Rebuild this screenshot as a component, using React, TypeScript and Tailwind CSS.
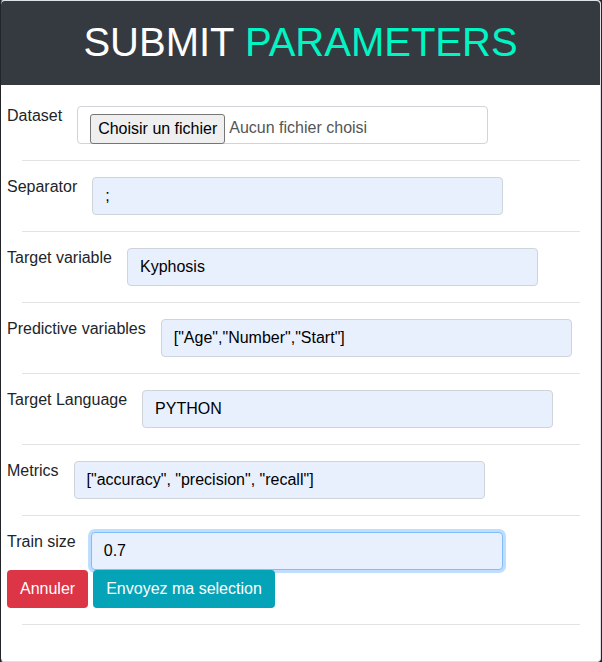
const font = { fontFamily: '"Liberation Sans", Arial, sans-serif' };

function Field({
  label,
  value,
  focused,
}: {
  label: string;
  value: string;
  focused?: boolean;
}) {
  return (
    <div className="flex items-start">
      <label className="-mt-0.5 mr-[15px] text-base leading-6 text-[#212529] whitespace-nowrap">
        {label}
      </label>
      <div
        className={
          focused
            ? "flex h-[38px] w-[412px] items-center rounded border border-[#80bdff] bg-[#e8f0fe] px-3 text-base text-black shadow-[0_0_0_3px_rgba(0,123,255,0.25)]"
            : "flex h-[38px] w-[411px] items-center rounded border border-[#ced4da] bg-[#e8f0fe] px-3 text-base text-black"
        }
      >
        {value}
      </div>
    </div>
  );
}

function Divider() {
  return <hr className="my-4 ml-[15px] w-[558px] border-0 border-t border-[#e3e3e3]" />;
}

export default function App() {
  return (
    <div className="flex h-[662px] w-[602px] bg-[#212529]" style={font}>
      <div className="flex h-[662px] w-[601px] flex-col rounded border border-[#dee2e6] border-l-[#212529] bg-white">
        <div className="flex h-[84px] items-center justify-center rounded-t bg-[#343a40] pb-[2px]">
          <h1 className="text-[40px] leading-[48px] text-white">
            SUBMIT <span className="text-[#00f5c4]">PARAMETERS</span>
          </h1>
        </div>

        <div className="pt-[21px] pl-[6px]">
          <div className="flex items-start">
            <label className="-mt-0.5 mr-[15px] text-base leading-6 text-[#212529]">Dataset</label>
            <div className="flex h-[38px] w-[411px] items-end rounded border border-[#ced4da] bg-white pl-3">
              <span className="mb-[-1px] rounded-[3px] border border-[#767676] bg-[#efefef] px-[7px] text-base leading-[28px] text-black">
                Choisir un fichier
              </span>
              <span className="mb-[3px] ml-1 text-base text-[#555]">Aucun fichier choisi</span>
            </div>
          </div>
          <Divider />
          <Field label="Separator" value=";" />
          <Divider />
          <Field label="Target variable" value="Kyphosis" />
          <Divider />
          <Field label="Predictive variables" value={'["Age","Number","Start"]'} />
          <Divider />
          <Field label="Target Language" value="PYTHON" />
          <Divider />
          <Field label="Metrics" value={'["accuracy", "precision", "recall"]'} />
          <Divider />
          <Field label="Train size" value="0.7" focused />
          <div className="flex gap-[5px]">
            <button className="h-[38px] rounded bg-[#dc3545] px-[13px] text-base text-white">Annuler</button>
            <button className="h-[38px] rounded bg-[#05a3b8] px-[13px] text-base text-white">
              Envoyez ma selection
            </button>
          </div>
          <Divider />
        </div>
      </div>
    </div>
  );
}
